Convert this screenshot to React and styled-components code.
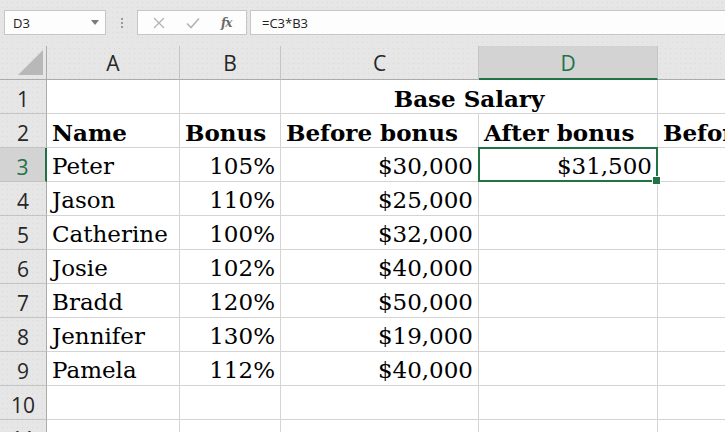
import React from "react";
import styled, { createGlobalStyle, css } from "styled-components";

const GREEN = "#217346";

const GlobalStyle = createGlobalStyle`
  html, body {
    margin: 0;
    padding: 0;
    background: #ffffff;
  }
  * { box-sizing: border-box; }
`;

const dots = css`
  background-color: #e6e6e6;
  background-image: radial-gradient(circle, #d9d9d9 0.6px, transparent 0.8px);
  background-size: 5px 5px;
`;

const Window = styled.div`
  width: 725px;
  height: 432px;
  overflow: hidden;
  font-family: "Open Sans", "Noto Sans", sans-serif;
  ${dots}
`;

const FormulaBar = styled.div`
  height: 46px;
  display: flex;
  align-items: flex-start;
  padding: 10px 0 0 4px;
`;

const Box = styled.div`
  height: 25px;
  background: #fdfdfd;
  border: 1px solid #c6c6c6;
  display: flex;
  align-items: center;
`;

const NameBox = styled(Box)`
  width: 102px;
  padding: 0 0 0 8px;
  justify-content: space-between;
  font-size: 13px;
  color: #222;
  span.caret {
    width: 0;
    height: 0;
    margin-right: 6px;
    border-left: 4px solid transparent;
    border-right: 4px solid transparent;
    border-top: 5px solid #7a7a7a;
  }
`;

const Grip = styled.div`
  width: 31px;
  height: 25px;
  display: flex;
  flex-direction: column;
  align-items: center;
  justify-content: center;
  gap: 2px;
  i {
    width: 2px;
    height: 2px;
    background: #9a9a9a;
  }
`;

const ButtonsBox = styled(Box)`
  width: 110px;
  justify-content: space-around;
  padding: 0 4px;
  color: #b0b0b0;
`;

const Fx = styled.span`
  font-family: "DejaVu Serif", serif;
  font-style: italic;
  font-weight: bold;
  font-size: 12px;
  color: #6a6a6a;
  letter-spacing: -1px;
`;

const FormulaInput = styled(Box)`
  flex: 1;
  margin-left: 3px;
  border-right: none;
  padding-left: 11px;
  font-size: 13px;
  color: #222;
`;

const Grid = styled.div`
  display: grid;
  grid-template-columns: 47px 133px 101px 198px 179px 220px;
  grid-auto-rows: 34px;
`;

const Corner = styled.div`
  ${dots}
  border-right: 1px solid #ababab;
  border-bottom: 1px solid #ababab;
  position: relative;
  &::after {
    content: "";
    position: absolute;
    right: 3px;
    bottom: 4px;
    width: 0;
    height: 0;
    border-left: 25px solid transparent;
    border-bottom: 25px solid #b8b8b8;
  }
`;

const ColHead = styled.div`
  ${dots}
  display: flex;
  align-items: center;
  justify-content: center;
  font-size: 21px;
  color: #262626;
  border-right: 1px solid #c4c4c4;
  border-bottom: 1px solid #ababab;
  ${(p) =>
    p.active &&
    css`
      background: #d3d3d3;
      background-image: none;
      color: ${GREEN};
      border-bottom: 2px solid ${GREEN};
      padding-top: 1px;
    `}
`;

const RowHead = styled.div`
  ${dots}
  display: flex;
  align-items: center;
  justify-content: center;
  padding-top: 4px;
  font-size: 21px;
  color: #262626;
  border-right: 1px solid #ababab;
  border-bottom: 1px solid #c4c4c4;
  ${(p) =>
    p.active &&
    css`
      background: #d3d3d3;
      background-image: none;
      color: ${GREEN};
      border-right: 2px solid ${GREEN};
    `}
`;

const Cell = styled.div`
  position: relative;
  background: #ffffff;
  display: flex;
  align-items: center;
  justify-content: ${(p) =>
    p.align === "right" ? "flex-end" : p.align === "center" ? "center" : "flex-start"};
  padding: 3px 5px 0 5px;
  border-right: 1px solid #d4d4d4;
  border-bottom: 1px solid #d4d4d4;
  font-family: "DejaVu Serif", "Liberation Serif", serif;
  font-size: 23px;
  font-weight: ${(p) => (p.bold ? 700 : 400)};
  color: #000;
  white-space: nowrap;
  overflow: hidden;
  grid-column: ${(p) => (p.span ? `span ${p.span}` : "auto")};
  ${(p) =>
    p.selected &&
    css`
      overflow: visible;
      z-index: 2;
      &::before {
        content: "";
        position: absolute;
        left: -1px;
        top: -1px;
        right: -1px;
        bottom: -1px;
        border: 2px solid ${GREEN};
        pointer-events: none;
      }
      &::after {
        content: "";
        position: absolute;
        right: -4px;
        bottom: -4px;
        width: 7px;
        height: 7px;
        background: ${GREEN};
        border: 1px solid #fff;
      }
    `}
`;

const columns = ["A", "B", "C", "D", "E"];

const people = [
  ["Peter", "105%", "$30,000", "$31,500"],
  ["Jason", "110%", "$25,000", ""],
  ["Catherine", "100%", "$32,000", ""],
  ["Josie", "102%", "$40,000", ""],
  ["Bradd", "120%", "$50,000", ""],
  ["Jennifer", "130%", "$19,000", ""],
  ["Pamela", "112%", "$40,000", ""],
];

const XIcon = () => (
  <svg width="12" height="12" viewBox="0 0 12 12" fill="none" stroke="#b4b4b4" strokeWidth="1.3">
    <path d="M1 1l10 10M11 1L1 11" />
  </svg>
);

const CheckIcon = () => (
  <svg width="14" height="12" viewBox="0 0 14 12" fill="none" stroke="#b4b4b4" strokeWidth="1.6">
    <path d="M1 6.5l4 4L13 1.5" />
  </svg>
);

export default function App() {
  return (
    <Window>
      <GlobalStyle />
      <FormulaBar>
        <NameBox>
          D3
          <span className="caret" />
        </NameBox>
        <Grip>
          <i />
          <i />
          <i />
        </Grip>
        <ButtonsBox>
          <XIcon />
          <CheckIcon />
          <Fx>fx</Fx>
        </ButtonsBox>
        <FormulaInput>=C3*B3</FormulaInput>
      </FormulaBar>

      <Grid>
        <Corner />
        {columns.map((c) => (
          <ColHead key={c} active={c === "D"}>
            {c}
          </ColHead>
        ))}

        <RowHead>1</RowHead>
        <Cell />
        <Cell />
        <Cell span={2} align="center" bold>
          Base Salary
        </Cell>
        <Cell />

        <RowHead>2</RowHead>
        <Cell bold>Name</Cell>
        <Cell bold>Bonus</Cell>
        <Cell bold>Before bonus</Cell>
        <Cell bold>After bonus</Cell>
        <Cell bold>Before bonus</Cell>

        {people.map((row, i) => (
          <React.Fragment key={row[0]}>
            <RowHead active={i === 0}>{i + 3}</RowHead>
            <Cell>{row[0]}</Cell>
            <Cell align="right">{row[1]}</Cell>
            <Cell align="right">{row[2]}</Cell>
            <Cell align="right" selected={i === 0}>
              {row[3]}
            </Cell>
            <Cell />
          </React.Fragment>
        ))}

        {[10, 11].map((n) => (
          <React.Fragment key={n}>
            <RowHead>{n}</RowHead>
            <Cell />
            <Cell />
            <Cell />
            <Cell />
            <Cell />
          </React.Fragment>
        ))}
      </Grid>
    </Window>
  );
}
